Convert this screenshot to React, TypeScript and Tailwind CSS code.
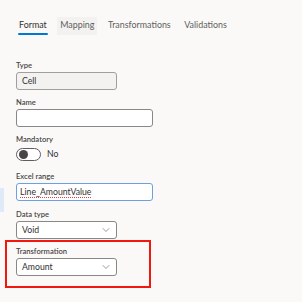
import { ChevronDown } from 'lucide-react';

const font = { fontFamily: 'Lato, "Segoe UI", "Open Sans", sans-serif' };

function Label({ children }: { children: string }) {
  return <div className="h-[10px] text-[7.6px] leading-[10px] font-semibold text-[#484644]">{children}</div>;
}

function Select({ value }: { value: string }) {
  return (
    <div className="mt-[2px] w-[101px] h-[18px] border border-[#8a8886] rounded-[3px] bg-white flex items-center justify-between pl-[5px] pr-[4px]">
      <span className="text-[8.7px] text-[#323130]">{value}</span>
      <ChevronDown size={12} strokeWidth={1.25} className="text-[#605e5c]" />
    </div>
  );
}

export default function App() {
  return (
    <div className="w-[302px] h-[302px] bg-[#faf9f8] relative overflow-hidden" style={font}>
      <div className="absolute left-0 top-[188px] w-[4px] h-[24px] bg-[#dfe9f7]" />

      <div className="flex pt-[17px] pl-[16px] gap-[7.5px] text-[8.9px]">
        <div className="h-[18px] px-[3px] pt-[1px] flex flex-col justify-between">
          <span className="text-[#323130] leading-[14px]">Format</span>
          <div className="h-[2px] bg-[#0078d4] rounded-full -mx-[1px]" />
        </div>
        <div className="h-[18px] px-[3px] pt-[1px] bg-[#f3f2f1] text-[#605e5c] leading-[14px]">Mapping</div>
        <div className="h-[18px] px-[3px] pt-[1px] text-[#605e5c] leading-[14px]">Transformations</div>
        <div className="h-[18px] px-[3px] pt-[1px] text-[#605e5c] leading-[14px]">Validations</div>
      </div>

      <div className="flex flex-col pl-[16px]">
        <div className="mt-[25px]">
          <Label>Type</Label>
          <div className="mt-[2px] w-[101px] h-[18px] border border-[#a19f9d] rounded-[3px] bg-[#f3f2f1] flex items-center pl-[5px] text-[8.7px] text-[#323130]">Cell</div>
        </div>

        <div className="mt-[7px]">
          <Label>Name</Label>
          <div className="mt-[2px] w-[137px] h-[18px] border border-[#8a8886] rounded-[3px] bg-white" />
        </div>

        <div className="mt-[7px]">
          <Label>Mandatory</Label>
          <div className="mt-[3px] h-[14px] flex items-center gap-[6px]">
            <div className="w-[25px] h-[13px] border border-[#605e5c] rounded-full bg-white flex items-center pl-[2px]">
              <div className="w-[9px] h-[9px] rounded-full bg-[#484644]" />
            </div>
            <span className="text-[8.7px] text-[#323130]">No</span>
          </div>
        </div>

        <div className="mt-[10px]">
          <Label>Excel range</Label>
          <div className="mt-[2px] w-[137px] h-[18px] border-[1.5px] border-[#6c9fe4] rounded-[3px] bg-white flex items-center pl-[3px]">
            <span className="text-[8.7px] text-[#323130] underline decoration-dotted decoration-[#e04040] underline-offset-2">Line_AmountValue</span>
          </div>
        </div>

        <div className="mt-[8px]">
          <Label>Data type</Label>
          <Select value="Void" />
        </div>

        <div className="mt-[1px] -ml-[11px] w-[146px] h-[48px] border-2 border-[#f0180f] pl-[9px] pt-[4px]">
          <Label>Transformation</Label>
          <Select value="Amount" />
        </div>
      </div>
    </div>
  );
}
